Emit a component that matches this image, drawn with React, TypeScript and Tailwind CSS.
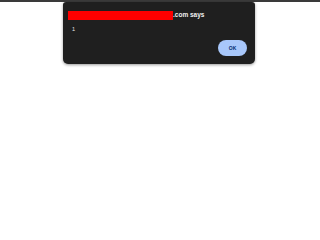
export default function App() {
  return (
    <div className="relative w-[320px] h-[214px] bg-white overflow-hidden font-['Liberation_Sans',Arial,sans-serif]">
      <div className="h-[2px] bg-[#3a3a3a]" />

      {/* alert dialog */}
      <div className="absolute left-[63px] top-[2px] w-[192px] h-[62px] rounded-b-[5px] rounded-t-[3px] bg-[#1f1f1f] shadow-[0_1px_3px_rgba(0,0,0,0.4)] pl-[5px] pr-[8px] pt-[8px] pb-[8px] flex flex-col">
        <div className="flex items-center h-[11px]">
          <div className="w-[105px] h-[9px] bg-[#ff0000]" />
          <span className="text-[6.5px] leading-none text-[#f1f1f1] font-semibold">.com says</span>
        </div>
        <div className="pl-[4px] mt-[6px] text-[5.5px] leading-none text-[#e3e3e3]">1</div>
        <div className="mt-auto flex justify-end">
          <button className="w-[29px] h-[16px] rounded-full bg-[#a8c7fa] text-[5px] font-semibold text-[#062e6f] leading-none flex items-center justify-center">
            OK
          </button>
        </div>
      </div>
    </div>
  );
}
